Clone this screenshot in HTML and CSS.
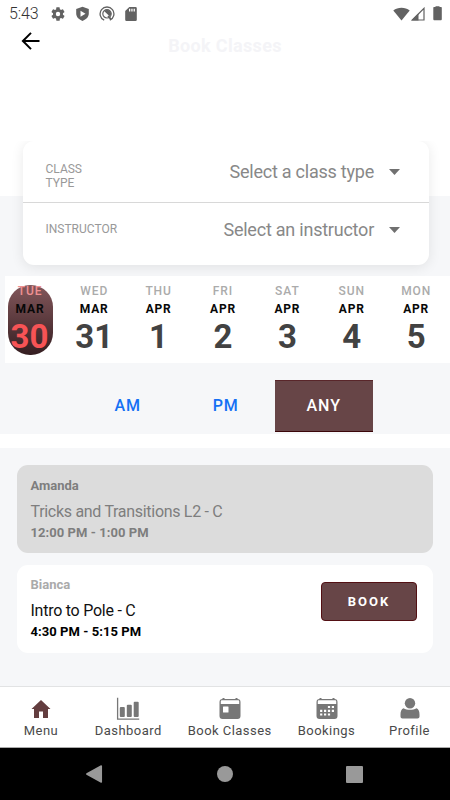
FILE: index.html
```html
<!DOCTYPE html>
<html lang="en">
<head>
<meta charset="utf-8">
<title>Book Classes</title>
<link rel="stylesheet" href="styles.css">
</head>
<body>
<div class="phone">
  <div class="status">
    <span class="clock">5:43</span>
    <svg class="st-gear" width="16" height="16" viewBox="0 0 24 24"><path d="M19.4 13c.04-.32.06-.66.06-1s-.02-.68-.07-1l2.1-1.65a.5.5 0 0 0 .12-.64l-2-3.46a.5.5 0 0 0-.6-.22l-2.5 1a7.3 7.3 0 0 0-1.7-.98l-.38-2.65A.5.5 0 0 0 14 2h-4a.5.5 0 0 0-.5.42l-.37 2.65c-.6.25-1.17.58-1.7.98l-2.48-1a.5.5 0 0 0-.61.22l-2 3.46a.5.5 0 0 0 .12.64L4.57 11a8 8 0 0 0 0 2l-2.11 1.65a.5.5 0 0 0-.12.64l2 3.46c.12.22.38.3.6.22l2.5-1c.52.4 1.08.73 1.69.98l.38 2.65c.03.24.24.4.49.4h4c.25 0 .46-.16.5-.42l.37-2.65a7.3 7.3 0 0 0 1.7-.98l2.48 1c.23.09.49 0 .61-.22l2-3.46a.5.5 0 0 0-.12-.64zM12 15.3a3.3 3.3 0 1 1 0-6.6 3.3 3.3 0 0 1 0 6.6z"/></svg>
    <svg class="st-shield" width="15" height="16" viewBox="0 0 15 16"><path fill-rule="evenodd" d="M7.5.8 1.2 3v4.6c0 3.300 2.500 5.900 6.300 7.500 3.800-1.600 6.300-4.200 6.300-7.500V3zM5.500 4.800v6l5-3z"/></svg>
    <svg class="st-circle" width="16" height="16" viewBox="0 0 16 16"><path d="M5.200 14.200A6.900 6.900 0 1 1 10.800 14.200" fill="none" stroke="#626262" stroke-width="1.300"/><circle cx="8" cy="7.800" r="4.200" fill="none" stroke="#626262" stroke-width="1.200"/><path d="M5.300 5.200a3.800 3.800 0 0 1 5.600 5.200zM9.600 9.400l3 3.200-1.200 1.300-3-3.400z"/></svg>
    <svg class="st-sd" width="12" height="16" viewBox="0 0 12 16"><path fill-rule="evenodd" d="M4.300 1H10.500a1.300 1.300 0 0 1 1.300 1.300v11.400a1.300 1.300 0 0 1-1.300 1.300h-9A1.300 1.300 0 0 1 .2 13.700V5zM4 2.800v2.700h1.300V2.800zm2.300 0v2.700h1.300V2.800zm2.300 0v2.700h1.300V2.800z"/></svg>
    <span class="grow"></span>
    <svg width="17" height="14" viewBox="0 0 17 14"><path d="M.3 3.500C4.800-.2 12.200-.2 16.700 3.500L8.500 13.500z"/></svg>
    <svg class="st-cell" width="14" height="14" viewBox="0 0 14 14"><path d="M1.300 13 13 1.300V13z" fill="none" stroke="#626262" stroke-width="1.200"/><path d="M.3 13.500 7.500 6.300v7.200z"/></svg>
    <svg class="st-bat" width="9" height="15" viewBox="0 0 9 15"><path d="M2.500 1V.3h4V1H8.200l.6.600v12l-.6.700H.9l-.6-.7v-12L.9 1z"/></svg>
  </div>
  <header class="header">
    <svg class="back" width="20" height="20" viewBox="0 0 20 20"><path d="M18.500 10H2.200M10 1.900 1.900 10l8.100 8.100" fill="none" stroke="#000" stroke-width="2"/></svg>
    <h1 class="title">Book Classes</h1>
    <span class="header-end"></span>
  </header>
  <main class="content">
    <section class="filters-wrap">
      <div class="filters">
        <div class="filter filter-type"><span class="label">CLASS<br>TYPE</span><span class="value">Select a class type</span><i class="caret"></i></div>
        <div class="filter filter-inst"><span class="label">INSTRUCTOR</span><span class="value">Select an instructor</span><i class="caret"></i></div>
      </div>
    </section>
    <section class="days">
      <div class="day day-on"><span class="dow">TUE</span><span class="mon">MAR</span><span class="num">30</span></div>
      <div class="day"><span class="dow">WED</span><span class="mon">MAR</span><span class="num">31</span></div>
      <div class="day"><span class="dow">THU</span><span class="mon">APR</span><span class="num">1</span></div>
      <div class="day"><span class="dow">FRI</span><span class="mon">APR</span><span class="num">2</span></div>
      <div class="day"><span class="dow">SAT</span><span class="mon">APR</span><span class="num">3</span></div>
      <div class="day"><span class="dow">SUN</span><span class="mon">APR</span><span class="num">4</span></div>
      <div class="day"><span class="dow">MON</span><span class="mon">APR</span><span class="num">5</span></div>
    </section>
    <section class="times">
      <span class="time">AM</span><span class="time">PM</span><span class="time time-on">ANY</span>
    </section>
  </main>
  <section class="classes">
    <article class="class class-past">
      <div class="info"><span class="teacher">Amanda</span><span class="name">Tricks and Transitions L2 - C</span><span class="hours">12:00 PM - 1:00 PM</span></div>
    </article>
    <article class="class">
      <div class="info"><span class="teacher">Bianca</span><span class="name name-open">Intro to Pole - C</span><span class="hours">4:30 PM - 5:15 PM</span></div>
      <button class="book">BOOK</button>
    </article>
  </section>
  <nav class="tabs">
    <div class="tab t1"><svg width="24" height="24" viewBox="0 0 24 24"><path fill="#633d3f" d="M12 3 2.500 12h2.500v9h5v-6.500h4V21h5v-9h2.500z"/></svg><span>Menu</span></div>
    <div class="tab t2"><svg width="24" height="24" viewBox="0 0 24 24"><path d="M1.600.8v21.400H23.200" fill="none" stroke="#777" stroke-width="1.300"/><rect x="3.800" y="10" width="5" height="10" rx="1"/><rect x="10.800" y="7.800" width="5" height="12.200" rx="1"/><rect x="17.700" y="4.800" width="5" height="15.200" rx="1"/></svg><span>Dashboard</span></div>
    <div class="tab t3"><svg width="24" height="24" viewBox="0 0 24 24"><path fill-rule="evenodd" d="M4.500 2V1h2v1h11V1h2v1c2 0 3 1 3 3v14c0 2-1 3-3 3h-15c-2 0-3-1-3-3V5c0-2 1-3 3-3zM2.800 4.300V7h18.400V4.300q0-1-1-1H3.800q-1 0-1 1zM5 10v5q0 .5.500.5h4.500q.5 0 .5-.5V10q0-.5-.5-.5H5.500q-.5 0-.5.500z"/></svg><span>Book Classes</span></div>
    <div class="tab t4"><svg width="24" height="24" viewBox="0 0 24 24"><path fill-rule="evenodd" d="M4.500 2V1h2v1h11V1h2v1c2 0 3 1 3 3v14c0 2-1 3-3 3h-15c-2 0-3-1-3-3V5c0-2 1-3 3-3zM2.800 4.300V7h18.400V4.300q0-1-1-1H3.800q-1 0-1 1z"/><path fill="none" stroke="#fff" stroke-width="2.200" stroke-dasharray="2.200 1.700" d="M12.900 10H19M5.100 13.800H19M5.100 17.500h10"/></svg><span>Bookings</span></div>
    <div class="tab t5"><svg width="24" height="24" viewBox="0 0 24 24"><circle cx="12" cy="6.200" r="5.200"/><path d="M5.600 11.200c3.400 2.200 9.400 2.200 12.800 0 2.200.8 3.100 3 3.100 6.300v2c0 1.300-.8 2-2 2h-15c-1.200 0-2-.7-2-2v-2c0-3.300.9-5.500 3.100-6.300z"/></svg><span>Profile</span></div>
  </nav>
  <footer class="system">
    <svg class="sys-back" width="18" height="20" viewBox="0 0 18 20"><path d="M16.300 2v16L1.800 10z" fill="#999" stroke="#999" stroke-linejoin="round" stroke-width="1.500"/></svg>
    <i class="sys-home"></i>
    <i class="sys-recent"></i>
  </footer>
</div>
</body>
</html>
```
FILE: styles.css
```css
* { box-sizing: border-box; }
body { margin: 0; background: #fff; font-family: Roboto, "Liberation Sans", sans-serif; }
svg { display: block; flex: none; }
.phone { width: 450px; height: 800px; overflow: hidden; display: flex; flex-direction: column; background: #fff; }
.phone > * { flex: none; }

.status { height: 27px; display: flex; align-items: center; padding: 0 8px 0 9px; }
.status svg { fill: #626262; }
.clock { width: 41px; font-size: 16px; line-height: 27px; font-weight: 300; color: #333; letter-spacing: -.1px; }
.st-shield { margin-left: 9px; }
.st-circle { margin-left: 9px; }
.st-sd { margin-left: 10px; }
.grow { flex: 1; }
.st-cell { margin-left: 1px; }
.st-bat { margin-left: 8px; }

.header { height: 114px; display: flex; justify-content: space-between; padding: 4px 21px 0; }
.back { width: 20px; height: 20px; }
.header-end { width: 20px; }
.title { margin: 0; padding-top: 3px; font-size: 18px; line-height: 24px; font-weight: 700; color: #f4f4f7; letter-spacing: .35px; }

.content { height: 293px; background: linear-gradient(#fff 55px, #f6f7f9 55px); }
.filters-wrap { height: 135px; padding: 0 21.500px 0 22.500px; overflow: hidden; }
.filters { height: 123.500px; border-radius: 11px; background: #fff; box-shadow: 0 2px 13px rgba(0, 0, 0, .09); }
.filter { display: flex; padding: 0 28.500px 0 23px; }
.filter-type { height: 62px; border-bottom: 1px solid #d8d8d8; padding-top: 21px; }
.filter-inst { padding-top: 19px; }
.label { flex: 1; font-size: 12px; line-height: 14px; color: #999; }
.value { font-size: 18px; line-height: 20px; color: #888; letter-spacing: -.23px; }
.caret { width: 11px; height: 6px; margin: 7px 0 0 15px; background: #707070; clip-path: polygon(0 0, 100% 0, 50% 100%); }
.filter-inst .value { margin-top: -2px; }
.filter-inst .caret { margin-top: 5px; }

.days { height: 87px; margin-left: 5px; background: #fff; display: grid; grid-template-columns: 57px repeat(6, 64.400px); }
.day { height: 70px; margin-top: 9px; display: flex; flex-direction: column; align-items: center; }
.day-on { width: 45px; margin-left: 2.500px; border-radius: 22px; background: linear-gradient(#83575b, #351e21); }
.dow { margin-top: -2px; font-size: 12px; line-height: 16px; font-weight: 500; color: #ababab; letter-spacing: .9px; }
.mon { font-size: 12px; line-height: 16px; margin-top: 2px; font-weight: 700; color: #080808; letter-spacing: .8px; }
.num { font-size: 33px; line-height: 38px; margin-top: 1px; font-weight: 700; color: #424242; }
.day-on .dow { color: #ef9092; }
.day-on .num { color: #f75355; margin-left: -1px; }

.times { height: 71px; display: flex; justify-content: center; padding: 17px 0 2px 1.500px; }
.time { width: 98px; line-height: 52px; text-align: center; font-size: 16px; font-weight: 500; color: #1470f4; letter-spacing: 1px; }
.time-on { color: #fff; background: #674547; border-bottom: 1px solid #3a0609; border-top: 1px solid #59262a; line-height: 50px; }

.classes { height: 238px; margin-top: 14px; padding: 17px 17px 0; background: #f6f7f9; }
.class { display: flex; justify-content: space-between; height: 88px; margin-bottom: 11.500px; padding: 13px 16px 0 13.500px; border-radius: 11px; background: #fff; }
.class-past { background: #dcdcdc; color: #7e7e7e; }
.info { display: flex; flex-direction: column; }
.teacher { font-size: 13px; line-height: 16px; font-weight: 700; color: #aaa; }
.class-past .teacher { color: #7e7e7e; }
.name { margin-top: 8px; font-size: 16px; line-height: 19px; color: #7e7e7e; letter-spacing: -.3px; }
.name-open { color: #111; letter-spacing: -.25px; }
.class:not(.class-past) .info { margin-top: -.500px; }
.hours { margin-top: 3.500px; font-size: 13px; line-height: 16px; font-weight: 700; letter-spacing: .06px; }
.book { width: 96px; height: 39px; margin-top: 4.500px; padding: 0; border: 1px solid #531014; border-radius: 4px; background: #674547; color: #fff; font: 700 13px/36px Roboto, sans-serif; letter-spacing: 2px; }

.tabs { height: 62px; display: flex; padding-top: 10px; background: #fff; border-top: 1px solid #e2e3e4; border-bottom: 1px solid #aaa; }
.tab { flex: none; display: flex; flex-direction: column; align-items: center; font-size: 13px; line-height: 16px; color: #4a4a4a; letter-spacing: .45px; white-space: nowrap; }
.tab svg { fill: #777; }
.tab span { margin-top: 2px; }
.t1 { width: 82px; }
.t2 { width: 92.500px; }
.t3 { width: 110.500px; }
.t4 { width: 83px; }
.t5 { width: 83px; }

.system { height: 52px; background: #000; display: flex; align-items: center; padding-left: 85px; }
.sys-home { width: 16px; height: 16px; margin-left: 114px; border-radius: 50%; background: #999; }
.sys-recent { width: 17px; height: 17px; margin-left: 113px; border-radius: 1px; background: #999; }
```
